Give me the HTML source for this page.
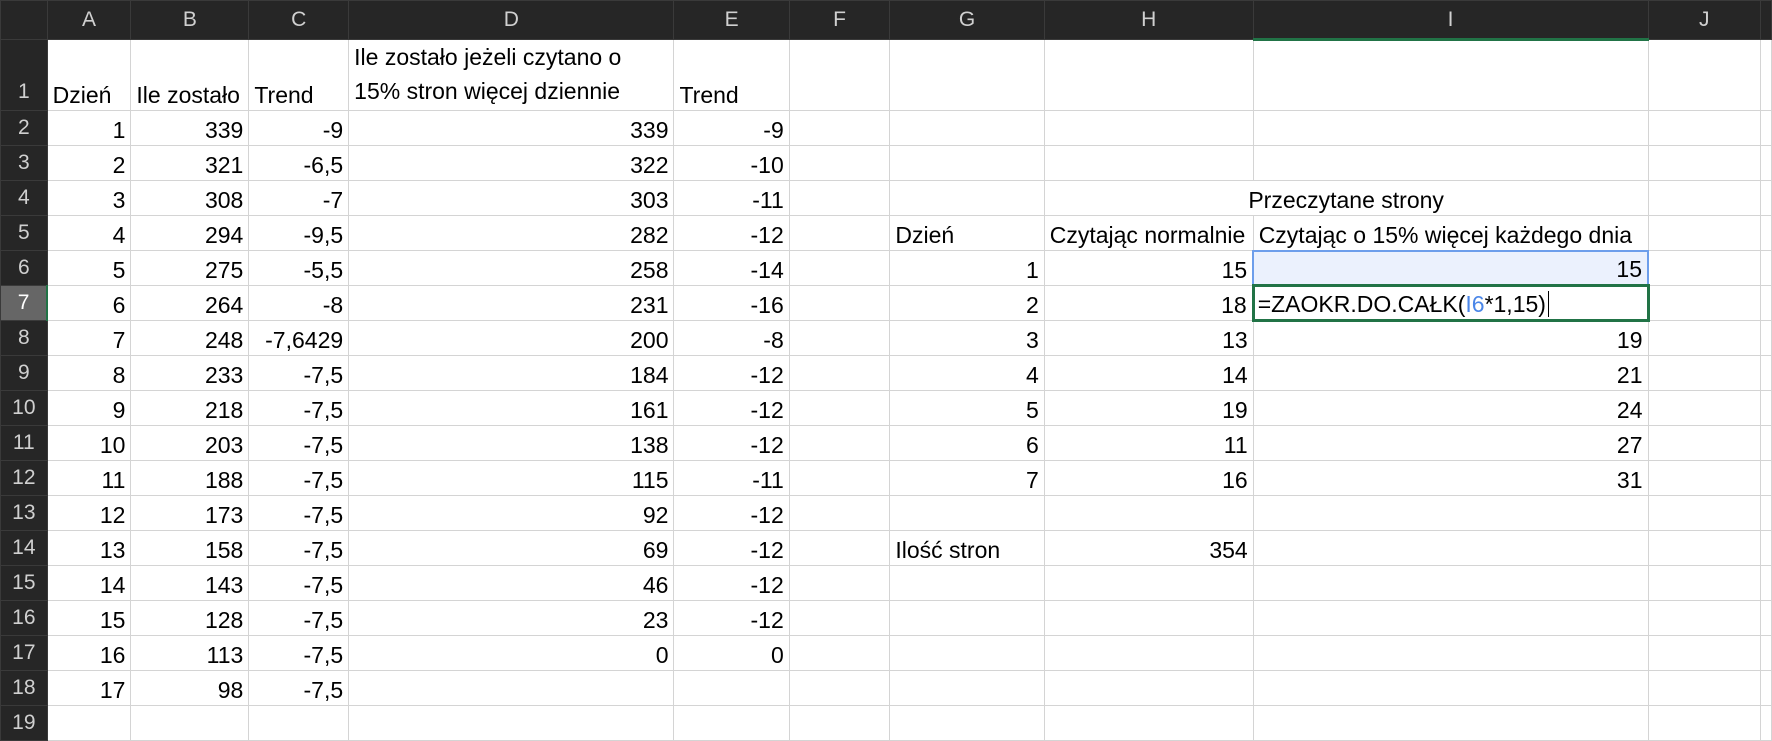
<!DOCTYPE html>
<html><head><meta charset="utf-8"><style>
body{margin:0;width:1772px;height:707px;overflow:hidden;background:#fff;font-family:"Liberation Sans","DejaVu Sans",sans-serif}
table{border-collapse:collapse;table-layout:fixed;position:absolute;left:0;top:0}
td{border:1px solid #d4d4d4;font-size:23px;color:#000;padding:0 5px 2px 5px;vertical-align:bottom;white-space:nowrap;overflow:visible;height:32px;line-height:26px;box-sizing:border-box}
tr{height:35px}
td.r{text-align:right}
tr.h{height:39px}
tr.h td{background:#262626;color:#d0d0d0;text-align:center;vertical-align:middle;border:1px solid #3a3a3a;height:39px;font-size:21px;padding:0}
td.rh{background:#262626;color:#d0d0d0;text-align:center;vertical-align:middle;border:1px solid #3a3a3a;padding:0;font-size:21px}
td.sel{background:#666;color:#fff}
tr.r1{height:70px}
tr.r1 td{height:70px}
</style></head><body>
<table>
<colgroup><col style="width:47px"><col style="width:84px"><col style="width:118px"><col style="width:100px"><col style="width:329px"><col style="width:116px"><col style="width:102px"><col style="width:155px"><col style="width:209px"><col style="width:395px"><col style="width:114px"><col style="width:3px"></colgroup>
<tr class="h"><td></td><td>A</td><td>B</td><td>C</td><td>D</td><td>E</td><td>F</td><td>G</td><td>H</td><td class="sel" style="border-bottom:3px solid #217346">I</td><td>J</td><td></td></tr>
<tr class="r1"><td class="rh" style="vertical-align:bottom;padding-bottom:5px">1</td><td>Dzień</td><td>Ile zostało</td><td>Trend</td><td style="line-height:34px;white-space:normal">Ile zostało jeżeli czytano o<br>15% stron więcej dziennie</td><td>Trend</td><td></td><td></td><td></td><td></td><td></td><td></td></tr>
<tr><td class="rh">2</td><td class="r">1</td><td class="r">339</td><td class="r">-9</td><td class="r">339</td><td class="r">-9</td><td></td><td></td><td></td><td></td><td></td><td></td></tr>
<tr><td class="rh">3</td><td class="r">2</td><td class="r">321</td><td class="r">-6,5</td><td class="r">322</td><td class="r">-10</td><td></td><td></td><td></td><td></td><td></td><td></td></tr>
<tr><td class="rh">4</td><td class="r">3</td><td class="r">308</td><td class="r">-7</td><td class="r">303</td><td class="r">-11</td><td></td><td></td><td colspan="2" style="text-align:center">Przeczytane strony</td><td></td><td></td></tr>
<tr><td class="rh">5</td><td class="r">4</td><td class="r">294</td><td class="r">-9,5</td><td class="r">282</td><td class="r">-12</td><td></td><td>Dzień</td><td>Czytając normalnie</td><td>Czytając o 15% więcej każdego dnia</td><td></td><td></td></tr>
<tr><td class="rh">6</td><td class="r">5</td><td class="r">275</td><td class="r">-5,5</td><td class="r">258</td><td class="r">-14</td><td></td><td class="r">1</td><td class="r">15</td><td class="r" style="background:#ebf1fd;border:2px solid #6d9eeb">15</td><td></td><td></td></tr>
<tr><td class="rh sel" style="border-right:2px solid #217346">7</td><td class="r">6</td><td class="r">264</td><td class="r">-8</td><td class="r">231</td><td class="r">-16</td><td></td><td class="r">2</td><td class="r">18</td><td style="border:3px solid #217346;padding-left:3px">=ZAOKR.DO.CAŁK(<span style="color:#4a86e8">I6</span>*1,15)<span style="border-left:1.5px solid #000;margin-left:2px"></span></td><td></td><td></td></tr>
<tr><td class="rh">8</td><td class="r">7</td><td class="r">248</td><td class="r">-7,6429</td><td class="r">200</td><td class="r">-8</td><td></td><td class="r">3</td><td class="r">13</td><td class="r">19</td><td></td><td></td></tr>
<tr><td class="rh">9</td><td class="r">8</td><td class="r">233</td><td class="r">-7,5</td><td class="r">184</td><td class="r">-12</td><td></td><td class="r">4</td><td class="r">14</td><td class="r">21</td><td></td><td></td></tr>
<tr><td class="rh">10</td><td class="r">9</td><td class="r">218</td><td class="r">-7,5</td><td class="r">161</td><td class="r">-12</td><td></td><td class="r">5</td><td class="r">19</td><td class="r">24</td><td></td><td></td></tr>
<tr><td class="rh">11</td><td class="r">10</td><td class="r">203</td><td class="r">-7,5</td><td class="r">138</td><td class="r">-12</td><td></td><td class="r">6</td><td class="r">11</td><td class="r">27</td><td></td><td></td></tr>
<tr><td class="rh">12</td><td class="r">11</td><td class="r">188</td><td class="r">-7,5</td><td class="r">115</td><td class="r">-11</td><td></td><td class="r">7</td><td class="r">16</td><td class="r">31</td><td></td><td></td></tr>
<tr><td class="rh">13</td><td class="r">12</td><td class="r">173</td><td class="r">-7,5</td><td class="r">92</td><td class="r">-12</td><td></td><td></td><td></td><td></td><td></td><td></td></tr>
<tr><td class="rh">14</td><td class="r">13</td><td class="r">158</td><td class="r">-7,5</td><td class="r">69</td><td class="r">-12</td><td></td><td>Ilość stron</td><td class="r">354</td><td></td><td></td><td></td></tr>
<tr><td class="rh">15</td><td class="r">14</td><td class="r">143</td><td class="r">-7,5</td><td class="r">46</td><td class="r">-12</td><td></td><td></td><td></td><td></td><td></td><td></td></tr>
<tr><td class="rh">16</td><td class="r">15</td><td class="r">128</td><td class="r">-7,5</td><td class="r">23</td><td class="r">-12</td><td></td><td></td><td></td><td></td><td></td><td></td></tr>
<tr><td class="rh">17</td><td class="r">16</td><td class="r">113</td><td class="r">-7,5</td><td class="r">0</td><td class="r">0</td><td></td><td></td><td></td><td></td><td></td><td></td></tr>
<tr><td class="rh">18</td><td class="r">17</td><td class="r">98</td><td class="r">-7,5</td><td></td><td></td><td></td><td></td><td></td><td></td><td></td><td></td></tr>
<tr><td class="rh">19</td><td></td><td></td><td></td><td></td><td></td><td></td><td></td><td></td><td></td><td></td><td></td></tr>
</table>
</body></html>
